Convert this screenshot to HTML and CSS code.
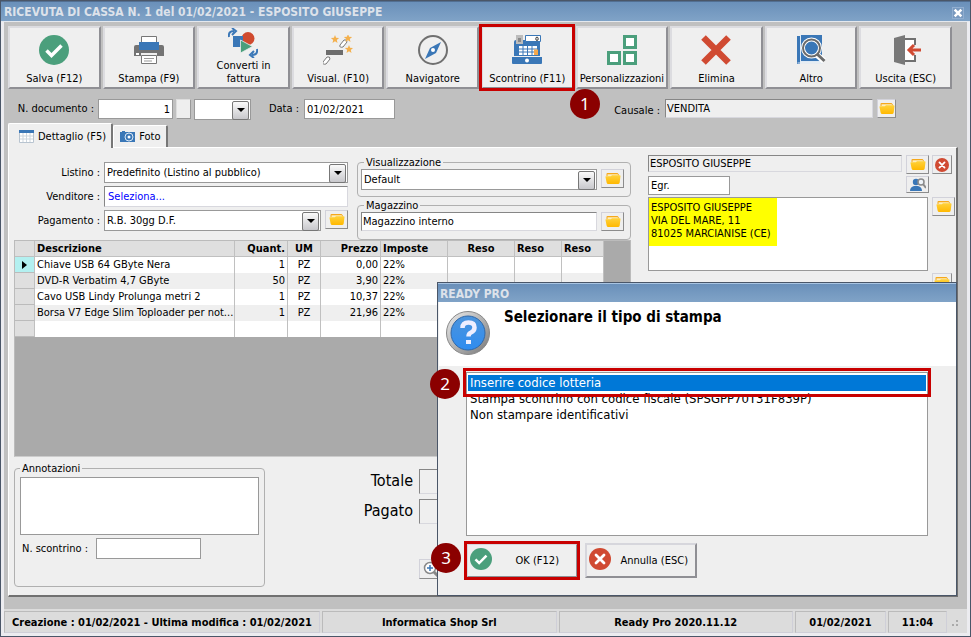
FILE: index.html
```html
<!DOCTYPE html>
<html lang="it">
<head>
<meta charset="utf-8">
<title>Ricevuta di cassa N. 1</title>
<link rel="stylesheet" href="styles.css">
</head>
<body>
<svg class="defs" aria-hidden="true">
  <defs>
    <linearGradient id="gold" x1="0" y1="0" x2="0" y2="1"><stop offset="0" stop-color="#ffd23c"/><stop offset="1" stop-color="#ffb800"/></linearGradient>
    <linearGradient id="steel" x1="0" y1="0" x2="1" y2="1"><stop offset="0" stop-color="#eee"/><stop offset="1" stop-color="#777"/></linearGradient>
    <linearGradient id="sky" x1="0" y1="0" x2="0" y2="1"><stop offset="0" stop-color="#4c94dc"/><stop offset="1" stop-color="#2f8cf0"/></linearGradient>
    <symbol id="folder" viewBox="0 0 16 13"><path d="M1.500 4V2q0-1 1-1h10l1.500 1.500V5z" fill="#f5a81c"/><path d="M2.500 2.200h10l1 1v3h-11z" fill="#fdeebb"/><path d="M.8 4.200h5l1.200-1h7.700q.9 0 .8.800l-.8 6.500q-.3 1.500-1.700 1.500H3.300q-1.400 0-1.700-1.500L.5 5q0-.8.300-.8z" fill="url(#gold)"/></symbol>
    <symbol id="cross" viewBox="0 0 22 22"><circle cx="11" cy="11" r="11" fill="#d04a32"/><path d="M7 7l8 8M15 7l-8 8" stroke="#fff" stroke-width="2.800" stroke-linecap="round"/></symbol>
    <symbol id="check" viewBox="0 0 30 30"><circle cx="15" cy="15" r="15" fill="#4b9f7c"/><path d="M7.500 15.500l5 5 10-10" fill="none" stroke="#fff" stroke-width="3.500"/></symbol>
  </defs>
</svg>
<div class="window">
  <header class="titlebar">
    <h1>RICEVUTA DI CASSA N. 1 del 01/02/2021 - ESPOSITO GIUSEPPE</h1>
    <button class="close" type="button" aria-label="Chiudi"><svg viewBox="0 0 12 12"><path d="M2 2l8 8M10 2l-8 8" stroke="#fff" stroke-width="3"/></svg></button>
  </header>
  <main class="body">
    <nav class="toolbar">
      <button class="tool" type="button"><svg viewBox="0 0 30 30"><use href="#check"/></svg><span>Salva (F12)</span></button>
      <button class="tool" type="button"><svg viewBox="0 0 30 30"><path d="M7.500 1.500h15v8h-15z" fill="#fff" stroke="#777"/><path d="M2 10h26q2 0 2 2v9h-7v-3H7v3H0v-9q0-2 2-2z" fill="#737373"/><path d="M5 7h20v8H5z" fill="#3a77b7"/><path d="M7.500 20.500h15v8h-15z" fill="#fff" stroke="#777"/><path d="M10 23.500h10M10 26h8" stroke="#999"/><path d="M2 18h3v2H2z" fill="#fff"/></svg><span>Stampa (F9)</span></button>
      <button class="tool" type="button"><svg viewBox="0 0 30 30"><circle cx="20" cy="10.500" r="6.500" fill="#d04a2e"/><path d="M5 8h10v11H5z" fill="#3a77b7"/><path d="M12.500 12v13l12-6.500z" fill="#4b9f7c" stroke="#efefef" stroke-width=".8"/><path d="M1 9q-1-6 5-6M4 0l4 3-4 4M29 21q1 6-5 6M26 23l-4 4 4 3" fill="none" stroke="#3a77b7" stroke-width="2"/></svg><span>Converti in<br>fattura</span></button>
      <button class="tool" type="button"><svg viewBox="0 0 30 30"><path d="M3 15h17v5H3z" fill="#6d6d6d"/><path d="M17 10l4-5q3-1 3 2l-4 5q-4 1-3-2zM0 27l4-5q3-1 3 2l-4 5q-4 1-3-2z" fill="#fff" stroke="#777"/><g fill="#f4b04c"><path id="star" d="M12 0l1.100 2.800 3 .2-2.300 1.900.7 3L12 6.300 9.500 7.900l.7-3L7.900 3l3-.2z"/><use href="#star" x="13" y="-1"/><use href="#star" x="14" y="10"/></g></svg><span>Visual. (F10)</span></button>
      <button class="tool" type="button"><svg viewBox="0 0 30 30"><circle cx="15" cy="15" r="14" fill="none" stroke="#707070" stroke-width="2"/><path d="M23 7l-5 11-11 6 5-11z" fill="#3a77b7"/><circle cx="15" cy="15" r="2" fill="#fff"/></svg><span>Navigatore</span></button>
      <div class="tool-step">
        <button class="tool" type="button"><svg viewBox="0 0 30 30"><path d="M2 7q0-2 2-2h22q2 0 2 2v14H2z" fill="#3a77b7"/><path d="M4 0h7v9H4z" fill="#bcbcbc"/><path d="M6 4h3M6 6h3" stroke="#555"/><path d="M13.500.500h15v6h-15z" fill="#fff" stroke="#3a77b7"/><ellipse cx="25" cy="3.800" rx="1.200" ry="1.700" fill="none" stroke="#333"/><path d="M7 11h18v9H7z" fill="#fff"/><path d="M11 11v9M15.500 11v9M20 11v9M7 14h18M7 17h18" stroke="#3a77b7"/><path d="M22 14.500h4V20h-4z" fill="#f5a84c"/><path d="M0 22h30v6q0 1-1 1H1q-1 0-1-1z" fill="#3a77b7"/><circle cx="15" cy="25.500" r="2" fill="#fff"/></svg><span>Scontrino (F11)</span></button>
        <b class="step">1</b>
      </div>
      <button class="tool" type="button"><svg viewBox="0 0 30 30" fill="#fff" stroke="#4b9f7c" stroke-width="3"><path d="M17.500 1.500h11v11h-11zM17.500 17.500h11v11h-11zM1.500 17.500h11v11h-11z"/></svg><span>Personalizzazioni</span></button>
      <button class="tool" type="button"><svg viewBox="0 0 30 30"><path d="M2.500 2.500l25 25M27.500 2.500l-25 25" stroke="#d04a32" stroke-width="6.500"/></svg><span>Elimina</span></button>
      <button class="tool" type="button"><svg viewBox="0 0 30 30"><path d="M1 1h3v28H1zM4 0h22v26H4z" fill="#3a77b7"/><path d="M4.500 0v26.500H26M1.500 28H27" fill="none" stroke="#dfeaf5"/><path d="M20 19l8 7" stroke="#fff" stroke-width="6"/><circle cx="15.500" cy="13" r="8.500" fill="#3a77b7" stroke="#fff" stroke-width="4"/><circle cx="15.500" cy="13" r="8.500" fill="none" stroke="#6b6b6b" stroke-width="2"/><path d="M21 19l7.500 7" stroke="#6b6b6b" stroke-width="3"/></svg><span>Altro</span></button>
      <button class="tool" type="button"><svg viewBox="0 0 30 30"><path d="M13 4h11v6M24 20v6H13" fill="#fff" stroke="#707070" stroke-width="2"/><path d="M13 5h10v20H13z" fill="#fff"/><path d="M3 3l11-3v30L3 27z" fill="#787878"/><path d="M30 15H19M23 10l-5 5 5 5" fill="none" stroke="#d04a32" stroke-width="3"/></svg><span>Uscita (ESC)</span></button>
    </nav>

    <div class="docrow">
      <label for="ndoc">N. documento :</label>
      <input id="ndoc" class="box num" value="1">
      <button class="mini" type="button" aria-label="Numera"></button>
      <span class="combo serie"><select aria-label="Serie"><option></option></select></span>
      <label class="lab-data" for="data">Data :</label>
      <input id="data" class="box data" value="01/02/2021">
      <label class="lab-causale" for="causale">Causale :</label>
      <input id="causale" class="sunk causale" value="VENDITA" readonly>
      <button class="ico" type="button" aria-label="Scegli causale"><svg><use href="#folder"/></svg></button>
    </div>

    <div class="tabs">
      <button class="tab active" type="button"><svg viewBox="0 0 15 13"><path d="M.500.500h14v12H.500z" fill="#fff" stroke="#b8c4d0"/><path d="M0 0h15v3H0z" fill="#3a77b7"/><path d="M1 6h13M1 9h13M4 3v9M7.500 3v9M11 3v9" stroke="#ccd5dd"/></svg>Dettaglio (F5)</button>
      <button class="tab" type="button"><svg viewBox="0 0 15 13"><path d="M0 2h2V1h3v1h10v10H0z" fill="#3a77b7"/><circle cx="9" cy="7" r="4" fill="#3a77b7" stroke="#dce8f4"/><circle cx="9" cy="7" r="1.500" fill="#fff"/></svg>Foto</button>
    </div>

    <section class="panel">
      <div class="left">
        <div class="forms">
          <div class="fields">
            <label for="listino">Listino :</label>
            <span class="combo wide"><select id="listino"><option>Predefinito (Listino al pubblico)</option></select></span>
            <label for="venditore">Venditore :</label>
            <input id="venditore" class="sunk white link wide" value="Seleziona...">
            <label for="pagamento">Pagamento :</label>
            <span class="combo"><select id="pagamento"><option>R.B. 30gg D.F.</option></select></span>
            <button class="ico" type="button" aria-label="Scegli pagamento"><svg><use href="#folder"/></svg></button>
          </div>
          <div class="groups">
            <fieldset>
              <legend>Visualizzazione</legend>
              <span class="combo"><select aria-label="Visualizzazione"><option>Default</option></select></span>
              <button class="ico" type="button" aria-label="Scegli visualizzazione"><svg><use href="#folder"/></svg></button>
            </fieldset>
            <fieldset>
              <legend>Magazzino</legend>
              <input class="sunk white" aria-label="Magazzino" value="Magazzino interno">
              <button class="ico" type="button" aria-label="Scegli magazzino"><svg><use href="#folder"/></svg></button>
            </fieldset>
          </div>
        </div>

        <div class="gridarea">
          <table>
            <colgroup><col class="c0"><col class="c1"><col class="c2"><col class="c3"><col class="c4"><col class="c5"><col class="c6"><col class="c7"><col class="c8"></colgroup>
            <thead><tr><th></th><th>Descrizione</th><th class="r">Quant.</th><th class="c">UM</th><th class="r">Prezzo</th><th>Imposte</th><th class="c">Reso</th><th>Reso</th><th>Reso</th></tr></thead>
            <tbody>
              <tr><td class="current"></td><td>Chiave USB 64 GByte Nera</td><td class="r">1</td><td class="c">PZ</td><td class="r">0,00</td><td>22%</td><td></td><td></td><td></td></tr>
              <tr><td></td><td>DVD-R Verbatim 4,7 GByte</td><td class="r">50</td><td class="c">PZ</td><td class="r">3,90</td><td>22%</td><td></td><td></td><td></td></tr>
              <tr><td></td><td>Cavo USB Lindy Prolunga metri 2</td><td class="r">1</td><td class="c">PZ</td><td class="r">10,37</td><td>22%</td><td></td><td></td><td></td></tr>
              <tr><td></td><td>Borsa V7 Edge Slim Toploader per not...</td><td class="r">1</td><td class="c">PZ</td><td class="r">21,96</td><td>22%</td><td></td><td></td><td></td></tr>
              <tr><td></td><td></td><td></td><td></td><td></td><td></td><td></td><td></td><td></td></tr>
            </tbody>
          </table>
        </div>

        <div class="bottom">
          <fieldset class="notes">
            <legend>Annotazioni</legend>
            <textarea aria-label="Annotazioni"></textarea>
            <div class="receipt"><label for="nscontrino">N. scontrino :</label><input id="nscontrino" class="box"></div>
          </fieldset>
          <div class="totals">
            <label for="totale">Totale</label><input id="totale" class="sunk" readonly>
            <label for="pagato">Pagato</label><input id="pagato" class="sunk" readonly>
            <button class="ico lens" type="button" aria-label="Ingrandisci"><svg viewBox="0 0 16 16"><path d="M10 10l5 5" stroke="#888" stroke-width="3"/><circle cx="7" cy="7" r="5.500" fill="#fff" stroke="#888" stroke-width="1.500"/><path d="M7 4v6M4 7h6" stroke="#3a77b7" stroke-width="1.500"/></svg></button>
          </div>
        </div>
      </div>

      <aside class="right">
        <input class="sunk name" aria-label="Cliente" value="ESPOSITO GIUSEPPE" readonly>
        <button class="ico" type="button" aria-label="Scegli cliente"><svg><use href="#folder"/></svg></button>
        <button class="ico red" type="button" aria-label="Rimuovi cliente"><svg><use href="#cross"/></svg></button>
        <input class="box egr" aria-label="Titolo" value="Egr.">
        <button class="ico find" type="button" aria-label="Cerca cliente"><svg viewBox="0 0 16 13"><circle cx="6" cy="4" r="3.200" fill="#3a77b7"/><path d="M0 13q0-4 4-5h4q4 1 4 5z" fill="#3a77b7"/><circle cx="11" cy="4" r="3" fill="#eef3f8" stroke="#8a8a8a" stroke-width="1.500"/><path d="M13 6l3 4" stroke="#8a8a8a" stroke-width="2"/></svg></button>
        <textarea class="address" aria-label="Indirizzo">ESPOSITO GIUSEPPE
VIA DEL MARE, 11
81025 MARCIANISE (CE)</textarea>
        <button class="ico addr" type="button" aria-label="Scegli indirizzo"><svg><use href="#folder"/></svg></button>
        <button class="ico dest" type="button" aria-label="Scegli destinazione"><svg><use href="#folder"/></svg></button>
      </aside>
    </section>
  </main>

  <footer class="status">
    <span class="s1">Creazione : 01/02/2021 - Ultima modifica : 01/02/2021</span>
    <span class="s2">Informatica Shop Srl</span>
    <span class="s3">Ready Pro 2020.11.12</span>
    <span class="s4">01/02/2021</span>
    <span class="s5">11:04</span>
    <svg viewBox="0 0 8 8"><path d="M5 0h2v2H5zM5 4h2v2H5zM1 4h2v2H1z" fill="#aaa"/></svg>
  </footer>

  <div class="dialog" role="dialog" aria-labelledby="question">
    <div class="dialog-title">READY PRO</div>
    <div class="dialog-head">
      <svg viewBox="0 0 44 44"><circle cx="22" cy="22" r="21.500" fill="url(#steel)" stroke="#888"/><circle cx="22" cy="22" r="17" fill="url(#sky)" stroke="#3168a8"/><path d="M16.500 17q0-5.500 6-5.500 6 0 6 5 0 3.500-3.500 5-2.500 1-2.500 4" fill="none" stroke="#eef" stroke-width="4.500"/><path d="M20 29h5v4h-5z" fill="#eef"/></svg>
      <h2 id="question">Selezionare il tipo di stampa</h2>
    </div>
    <div class="dialog-body">
      <div class="choices">
        <ul role="listbox" aria-labelledby="question">
          <li role="option" aria-selected="true">Inserire codice lotteria</li>
          <li role="option" aria-selected="false">Stampa scontrino con codice fiscale (SPSGPP70T31F839P)</li>
          <li role="option" aria-selected="false">Non stampare identificativi</li>
        </ul>
        <i class="frame"></i>
        <b class="step">2</b>
      </div>
      <div class="actions">
        <div class="ok"><button type="button"><svg><use href="#check"/></svg><span>OK (F12)</span></button><b class="step">3</b></div>
        <button type="button"><svg><use href="#cross"/></svg><span>Annulla (ESC)</span></button>
      </div>
    </div>
  </div>
</div>
</body>
</html>
```
FILE: styles.css
```css
* { box-sizing: border-box; }
body {
  margin: 0;
  color: #000;
  font: 11px/13px "DejaVu Sans Condensed", "DejaVu Sans", sans-serif;
}
button, input, select, textarea { font: inherit; color: inherit; margin: 0; border-radius: 0; }
.defs { position: absolute; width: 0; height: 0; }

.window {
  position: relative;
  display: flex;
  flex-direction: column;
  min-height: 100vh;
  border: 1px solid #4a5668;
  background: #ececf0;
}
.titlebar {
  display: flex;
  align-items: center;
  justify-content: space-between;
  height: 21px;
  padding: 2px 3px 0;
  border-top: 1px solid #526f92;
  border-bottom: 1px solid #e4e8ee;
  background: linear-gradient(#6a90ba, #80a3c7);
}
.titlebar h1, .dialog-title {
  margin: 0;
  color: #dde2ea;
  font: bold 12px/15px "DejaVu Sans Condensed", "DejaVu Sans", sans-serif;
}
.close { width: 12px; height: 12px; margin-right: 3px; padding: 0; border: 1px solid #91aed0; background: #7899bf; }
.close svg { display: block; width: 10px; height: 10px; }

.body {
  flex: 1;
  display: flex;
  flex-direction: column;
  margin: 0 3px;
  padding: 4px 9px 12px 4px;
  background: #c0c0c0;
}

.toolbar { display: grid; grid-template-columns: repeat(10, minmax(0, 1fr)); gap: 2px; margin-right: 6px; }
.tool {
  display: flex;
  flex-direction: column;
  align-items: center;
  justify-content: flex-end;
  width: 100%;
  height: 63px;
  padding: 0 0 2px;
  border: 2px solid;
  border-color: #dcdce0 #8f8f94 #8f8f94 #dcdce0;
  background: #efefef;
  text-align: center;
}
.tool svg { width: 30px; height: 30px; flex: none; margin-bottom: 7px; }
.tool:nth-child(3) svg { margin-bottom: 1px; }
.tool span { white-space: nowrap; }
.tool-step { position: relative; }
.tool-step::after {
  content: "";
  position: absolute;
  inset: -2px -1px -2px -2px;
  border: 3px solid #c80000;
}
.step {
  position: absolute;
  z-index: 2;
  width: 30px;
  height: 30px;
  border-radius: 50%;
  background: #8b0000;
  color: #fff;
  font: 17px/30px "Noto Sans", sans-serif;
  text-align: center;
}
.tool-step .step { left: 89px; top: 63px; }

.docrow { display: flex; align-items: flex-start; margin: 9px 62px 0 0; height: 24px; }
.docrow > * { margin-top: 1px; }
.docrow label { width: 90px; padding-top: 3px; white-space: nowrap; text-align: right; padding-right: 4px; }
.docrow .lab-data { width: 53px; padding-right: 5px; }
.docrow .lab-causale { flex: 1; padding-right: 5px; padding-top: 5px; }
.box, .sunk {
  min-width: 0;
  height: 20px;
  padding: 0 2px;
  border: 1px solid #999;
  background: #fff;
}
.num { width: 75px; text-align: right; }
.data { width: 91px; }
.sunk {
  height: 19px;
  padding: 0 1px;
  border: 1px solid;
  border-color: #868686 #d8d8de #d8d8de #868686;
  background: #efefef;
}
.white { background: #fff; }
.link { color: #00f; padding-left: 3px; }
.causale { width: 208px; }
.mini { width: 15px; height: 20px; margin: 1px 3px 0; border: 1px solid; border-color: #ddd #999 #999 #ddd; background: #eee; }
.serie { width: 57px; }

.combo { position: relative; display: block; height: 21px; }
.combo select {
  appearance: none;
  display: block;
  width: 100%;
  height: 100%;
  padding: 0 20px 0 2px;
  border: 1px solid #999;
  background: #fff;
}
.combo::before {
  content: "";
  position: absolute;
  right: 2px;
  top: 2px;
  width: 15px;
  height: 17px;
  border: 1px solid #777;
  border-radius: 2px;
  background: linear-gradient(#fafafa, #c8c8cc);
  pointer-events: none;
}
.combo::after {
  content: "";
  position: absolute;
  right: 6px;
  top: 9px;
  border: solid transparent;
  border-width: 4px 4px 0;
  border-top-color: #000;
  pointer-events: none;
}
.ico {
  display: flex;
  align-items: center;
  justify-content: center;
  width: 23px;
  height: 19px;
  padding: 0;
  border: 1px solid;
  border-color: #d2d2da #8c8c8c #8c8c8c #d2d2da;
  background: #efefef;
}
.ico svg { flex: none; width: 16px; height: 13px; }
.docrow .ico { width: 19px; margin-left: 4px; }

.tabs { display: flex; align-items: flex-end; height: 25px; }
.tab {
  display: flex;
  align-items: center;
  gap: 4px;
  height: 22px;
  padding: 0 5px 0 6px;
  border: 1px solid #fff;
  border-right: 2px solid #777;
  border-bottom: 0;
  border-radius: 2px 2px 0 0;
  background: #efefef;
  white-space: nowrap;
}
.tab svg { width: 15px; height: 13px; }
.tab.active { position: relative; height: 25px; margin-bottom: -1px; padding: 0 5px 0 10px; }

.panel {
  flex: 1;
  display: flex;
  gap: 17px;
  padding: 13px 1px 8px 5px;
  border: solid;
  border-width: 1px 2px 2px 1px;
  border-color: #fff #707070 #707070 #fff;
  background: #efefef;
}
.left { flex: 1; display: flex; flex-direction: column; min-width: 0; }
.forms { display: flex; gap: 9px; height: 79px; }
.fields {
  flex: 1;
  display: grid;
  grid-template-columns: 86px 1fr 23px;
  grid-template-rows: 21px 21px 21px;
  gap: 3px 4px;
  align-content: start;
  padding-top: 1px;
}
.fields label { text-align: right; padding-top: 4px; white-space: nowrap; }
.fields .wide { grid-column: span 2; }
.fields input { width: 100%; height: 21px; }
.groups { flex: 0 0 274px; display: flex; flex-direction: column; gap: 2px; margin-top: -5px; }
fieldset {
  min-width: 0;
  margin: 0;
  padding: 0 6px 5px 3px;
  border: 1px solid #b0b0b0;
  border-radius: 4px;
}
legend { margin-left: 3px; padding: 0 2px; }
.groups fieldset { display: flex; gap: 4px; height: 41px; }
.groups .combo, .groups input { flex: 1; }

.gridarea { flex: 1; background: #aaa; border: 1px solid #bbb; border-bottom-color: #ccc; }
table { width: 589px; table-layout: fixed; border-collapse: separate; border-spacing: 0; background: #fff; }
.c0 { width: 20px; } .c1 { width: 200px; } .c2 { width: 53px; } .c3 { width: 33px; } .c4 { width: 60px; }
.c5 { width: 67px; } .c6 { width: 67px; } .c7 { width: 47px; } .c8 { width: 42px; }
th, td {
  height: 16px;
  padding: 0 2px;
  border-right: 1px solid #c0c0c0;
  line-height: 14px;
  text-align: left;
  white-space: nowrap;
  overflow: hidden;
}
th { background: #dfdfdf; border-bottom: 1px solid #c0c0c0; }
tbody tr:nth-child(even) { background: #efefef; }
td:first-child { background: #dfdfdf; border-bottom: 1px solid #bbb; }
td.current { padding-left: 7px; background: #b3f0f0; }
td.current::after {
  content: "";
  display: block;
  width: 0;
  border: solid transparent;
  border-width: 4px 0 4px 5px;
  border-left-color: #000;
}
.r { text-align: right; }
.c { text-align: center; }

.bottom { display: flex; gap: 60px; margin-top: 5px; }
.notes { flex: 0 0 251px; height: 125px; padding: 0 5px; }
.notes legend { margin-left: 0; }
textarea { display: block; resize: none; border: 1px solid #999; padding: 2px; background: #fff; }
.notes textarea { width: 100%; height: 58px; margin-top: 2px; }
.receipt { display: flex; align-items: center; margin-top: 3px; }
.receipt label { flex: 0 0 76px; padding-left: 2px; white-space: nowrap; }
.receipt input { width: 105px; height: 21px; }
.totals {
  flex: 1;
  display: grid;
  grid-template-columns: 88px 1fr;
  grid-template-rows: 25px 25px 50px;
  gap: 5px 6px;
  align-content: start;
  padding-top: 7px;
}
.totals label { font-size: 16px; line-height: 24px; text-align: right; }
.totals input { width: 100%; height: 25px; }
.lens { grid-column: 2; align-self: end; height: 20px; }
.lens svg { width: 16px; height: 16px; }

.right {
  flex: 0 0 307px;
  display: grid;
  grid-template-columns: 254px 22px 21px;
  grid-template-rows: 19px 19px 74px 18px;
  gap: 2px 4px;
  align-content: start;
  margin-top: -6px;
}
.name { height: 17px; }
.egr { width: 82px; height: 19px; }
.find { height: 17px; }
.red svg { width: 14px; height: 14px; }
.red, .dest { width: 20px; }
.addr, .dest { grid-column: 3; }
.address { grid-column: 1 / span 2; background: #fff linear-gradient(#ff0, #ff0) no-repeat 0 0 / 128px 48px; padding: 3px 2px; white-space: pre; overflow: hidden; }

.status { display: flex; gap: 2px; height: 24px; margin: 0 3px 3px; padding: 2px 0 0; background: #dcdcdc; font-weight: bold; }
.status span {
  padding: 4px 3px;
  border: 1px solid;
  border-color: #bbb #cfcfd8 #cfcfd8 #bbb;
  text-align: center;
  white-space: nowrap;
}
.s1 { flex: 0 1 316px; }
.s2 { flex: 235; }
.s3 { flex: 235; }
.s4 { flex: 0 0 91px; }
.s5 { flex: 0 0 59px; }
.status svg { flex: 0 0 8px; height: 8px; margin: 9px 8px 0 2px; }

.dialog {
  position: absolute;
  left: 436px;
  right: 13px;
  top: 281px;
  bottom: 40px;
  display: flex;
  flex-direction: column;
  border: 1px solid #4a5668;
  background: #efefef;
}
.dialog-title {
  height: 19px;
  padding: 3px 2px 0;
  border-top: 1px solid #a8c4e2;
  background: linear-gradient(#6a90ba, #80a3c7);
}
.dialog-head { display: flex; gap: 14px; height: 64px; margin-left: 1px; padding: 9px 7px; background: #fff; }
.dialog-head svg { width: 44px; height: 44px; }
.dialog-head h2 { margin: -3px 0 0; font-size: 15px; line-height: 18px; }
.dialog-body { flex: 1; display: flex; flex-direction: column; padding: 6px 28px 17px; }
.choices { flex: 1; position: relative; }
.choices ul {
  height: 100%;
  margin: 0;
  padding: 2px 1px;
  border: 1px solid #999;
  background: #fff;
  list-style: none;
  font-size: 13px;
  line-height: 16px;
}
.choices li { padding: 0 2px; }
.choices li[aria-selected="true"] { background: #0078d7; color: #fff; }
.frame { position: absolute; inset: -4px -3px auto; height: 29px; border: 3px solid #c80000; }
.choices .step { left: -36px; top: -3px; }
.actions { display: flex; gap: 7px; margin-top: 7px; }
.actions button {
  display: flex;
  align-items: center;
  width: 112px;
  height: 35px;
  padding: 0 7px 0 2px;
  border: 2px solid;
  border-color: #d6d6dc #8f8f94 #8f8f94 #d6d6dc;
  background: #efefef;
  white-space: nowrap;
}
.actions svg { flex: none; width: 22px; height: 22px; margin-top: -4px; }
.actions button span { flex: 1; text-align: right; }
.ok { position: relative; }
.ok button span { padding-right: 10px; }
.ok::after { content: ""; position: absolute; inset: -2px; border: 3px solid #c80000; }
.ok .step { left: -35px; top: 0; }
```
